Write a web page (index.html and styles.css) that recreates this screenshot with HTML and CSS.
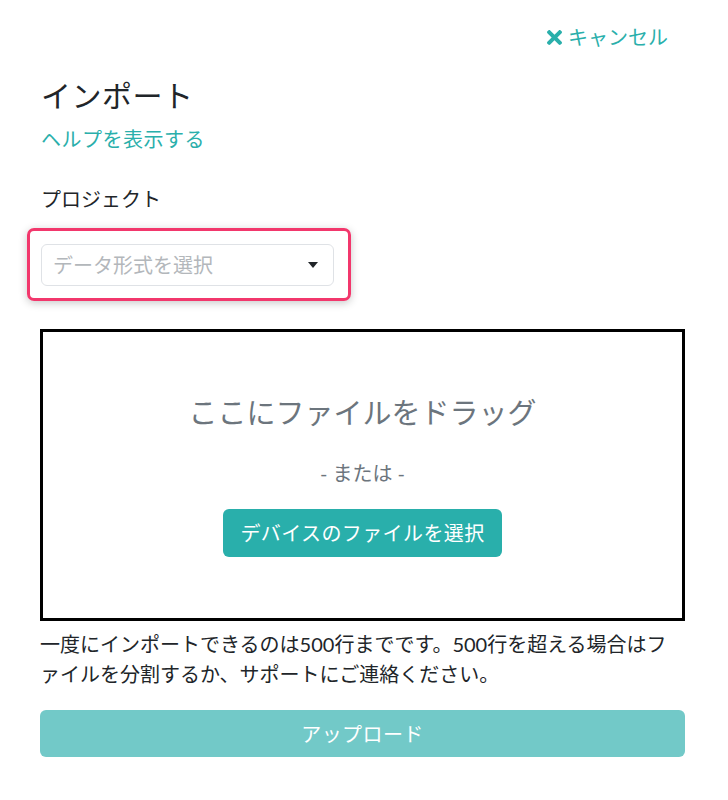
FILE: index.html
```html
<!DOCTYPE html>
<html lang="ja">
<head>
<meta charset="utf-8">
<title>インポート</title>
<link rel="stylesheet" href="styles.css">
</head>
<body>
<div class="page">
  <div class="top-bar">
    <a class="cancel" href="#">
      <svg class="cancel-icon" viewBox="0 80 352 352" aria-hidden="true"><path d="M242.72 256l100.07-100.07c12.28-12.28 12.28-32.19 0-44.48l-22.24-22.24c-12.28-12.28-32.19-12.28-44.48 0L176 189.28 75.930 89.21c-12.280-12.28-32.190-12.28-44.480 0L9.21 111.45c-12.28 12.28-12.28 32.19 0 44.48L109.28 256 9.21 356.070c-12.280 12.28-12.280 32.19 0 44.48l22.24 22.24c12.28 12.28 32.2 12.28 44.48 0L176 322.72l100.07 100.07c12.28 12.28 32.2 12.28 44.48 0l22.24-22.24c12.28-12.28 12.28-32.19 0-44.48L242.72 256z"/></svg>
      <span>キャンセル</span>
    </a>
  </div>
  <h1 class="title">インポート</h1>
  <a class="help" href="#">ヘルプを表示する</a>
  <div class="label">プロジェクト</div>
  <div class="highlight">
    <div class="select">
      <span class="placeholder">データ形式を選択</span>
      <span class="caret"></span>
    </div>
  </div>
  <div class="dropzone">
    <div class="drop-title">ここにファイルをドラッグ</div>
    <div class="drop-or">- または -</div>
    <button class="choose-btn" type="button">デバイスのファイルを選択</button>
  </div>
  <p class="note">一度にインポートできるのは500行までです。500行を超える場合はファイルを分割するか、サポートにご連絡ください。</p>
  <button class="upload-btn" type="button">アップロード</button>
</div>
</body>
</html>
```
FILE: styles.css
```css
html, body {
  margin: 0;
  padding: 0;
  background: #ffffff;
}
body {
  font-family: "Lato", "Noto Sans CJK JP", sans-serif;
  font-size: 20px;
  line-height: 30px;
  color: #212529;
}
.page {
  width: 645px;
  margin-left: 40px;
  padding-top: 22px;
  display: flex;
  flex-direction: column;
  align-items: flex-start;
}
.top-bar {
  align-self: stretch;
  display: flex;
  justify-content: flex-end;
  padding-right: 17px;
}
.cancel {
  display: flex;
  align-items: center;
  gap: 6px;
  color: #2aafab;
  text-decoration: none;
}
.cancel-icon {
  width: 15px;
  height: 15px;
  fill: #2aafab;
}
.title {
  margin: 21px 0 0 1px;
  font-size: 30px;
  line-height: 45px;
  font-weight: 400;
  letter-spacing: 0.5px;
  color: #212529;
}
.help {
  margin-top: 6px;
  margin-left: 1px;
  letter-spacing: 0.5px;
  color: #2aafab;
  text-decoration: none;
}
.label {
  margin-top: 30px;
  margin-left: 1px;
}
.highlight {
  margin-top: 14px;
  margin-left: -13px;
  padding: 13px 14px 12px 11px;
  border: 3px solid #f2376c;
  border-radius: 7px;
  box-shadow: 0 2px 8px rgba(0, 0, 0, 0.22);
}
.select {
  box-sizing: content-box;
  width: 265px;
  height: 40px;
  border: 1px solid #dfe2e6;
  border-radius: 6px;
  padding: 0 15px 0 11px;
  display: flex;
  align-items: center;
  justify-content: space-between;
}
.placeholder {
  color: #b3b7bb;
}
.caret {
  width: 0;
  height: 0;
  border-left: 5.5px solid transparent;
  border-right: 5.5px solid transparent;
  border-top: 6px solid #212529;
}
.dropzone {
  align-self: stretch;
  margin-top: 28px;
  height: 292px;
  box-sizing: border-box;
  border: 3px solid #000000;
  display: flex;
  flex-direction: column;
  align-items: center;
  padding-top: 59px;
}
.drop-title {
  font-size: 29px;
  line-height: 44px;
  color: #6c757d;
}
.drop-or {
  margin-top: 23px;
  color: #6c757d;
}
.choose-btn {
  margin-top: 21px;
  height: 48px;
  padding: 0 17px;
  border: none;
  border-radius: 6px;
  background: #29afab;
  color: #ffffff;
  font-family: inherit;
  font-size: 20px;
  line-height: 30px;
  letter-spacing: 0.4px;
}
.note {
  margin: 8px 0 0 0;
  line-height: 30px;
}
.upload-btn {
  align-self: stretch;
  margin-top: 21px;
  height: 47px;
  border: none;
  border-radius: 6px;
  background: #72c9c8;
  color: #ffffff;
  font-family: inherit;
  font-size: 20px;
  line-height: 30px;
  letter-spacing: 0.4px;
}
```
